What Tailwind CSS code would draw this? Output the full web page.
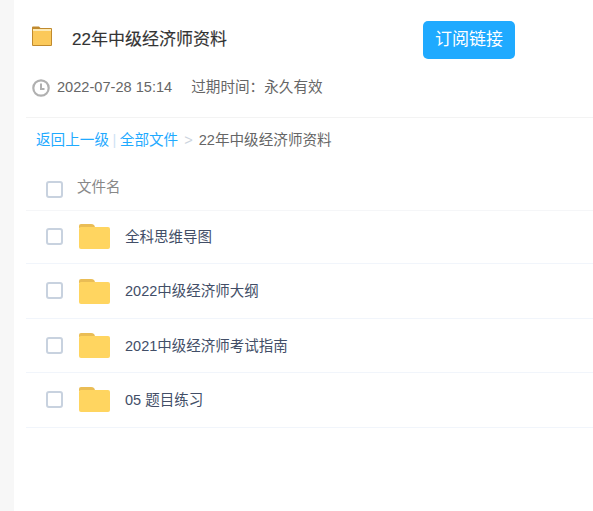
<!DOCTYPE html>
<html lang="zh">
<head>
    <meta charset="UTF-8">
    <title>22年中级经济师资料</title>
    <script src="https://cdn.jsdelivr.net/npm/@tailwindcss/browser@4"></script>
</head>
<body class="h-[511px] overflow-hidden bg-white font-['Liberation_Sans','Noto_Sans_CJK_SC',sans-serif]">
    <div class="flex h-[511px]">
        <!-- Left gutter -->
        <div class="w-[14px] shrink-0 bg-[#f7f7f7]"></div>

        <div class="min-w-0 flex-1 pl-3">
            <!-- Header -->
            <div class="h-[118px] border-b border-[#f3f3f3]">
                <div class="flex h-[77px] items-center pl-[6px]">
                    <svg class="mb-[5px] h-[20px] w-[20px] shrink-0" viewBox="0 0 20 20">
                        <path d="M0 1.5A1 1 0 0 1 1 .5h6l1.5 1.5H19a1 1 0 0 1 1 1V19a1 1 0 0 1-1 1H1a1 1 0 0 1-1-1z" fill="#c08a2e"/>
                        <rect x="1" y="3" width="18" height="16" fill="#fbc95a"/>
                        <rect x="1" y="3" width="18" height="2" fill="#fdeab5"/>
                    </svg>
                    <h1 class="ml-5 mt-[2px] w-[351px] text-[17px] font-normal text-[#333] [-webkit-text-stroke:0.15px_#333]">22年中级经济师资料</h1>
                    <button class="mt-[2px] h-[38px] w-[92px] rounded-[5px] bg-[#1faaff] text-[17px] text-white">订阅链接</button>
                </div>
                <div class="flex items-center pl-[6px] text-[14.6px] text-[#666]">
                    <svg class="h-[18px] w-[18px]" viewBox="0 0 18 18" fill="none" stroke="#b0b0b0">
                        <circle cx="9" cy="9" r="7.7" stroke-width="2.2"/>
                        <path d="M9 4.5V10h3.5" stroke-width="2"/>
                    </svg>
                    <span class="ml-[7px]">2022-07-28 15:14</span>
                    <span class="ml-[19px]">过期时间：永久有效</span>
                </div>
            </div>

            <!-- Breadcrumb -->
            <div class="flex h-[45px] items-center pl-[10px] text-[14.6px] text-[#666]">
                <a class="text-[#1faaff]">返回上一级</a>
                <span class="mx-[3.5px] text-[#cfe3f5]">|</span>
                <a class="text-[#1faaff]">全部文件</a>
                <span class="mx-[6px] text-[#ccd4de]">&gt;</span>
                <span>22年中级经济师资料</span>
            </div>

            <!-- File list -->
            <div class="flex h-[48px] items-center border-b border-[#f5f6f8] pl-5 text-[14.5px] text-[#888]">
                <span class="mt-[5px] h-[17px] w-[17px] rounded-[3px] border-2 border-[#c8d2df]"></span>
                <span class="ml-[14px] mt-[2px]">文件名</span>
            </div>
            <ul class="text-[14.5px] text-[#424e67]">
                <li class="flex h-[53px] items-center border-b border-[#f1f5fb] pl-5">
                    <span class="mb-[1px] h-[17px] w-[17px] rounded-[3px] border-2 border-[#c8d2df]"></span>
                    <svg class="mb-[2px] ml-[16px] h-[26px] w-[31px]" viewBox="0 0 31 26">
                        <path d="M0 3a2 2 0 0 1 2-2h10a4 4 0 0 1 4 4H0z" fill="#eabd55"/>
                        <rect y="4" width="31" height="22" rx="2" fill="#ffd560"/>
                    </svg>
                    <span class="ml-[15px] mt-[2px]">全科思维导图</span>
                </li>
                <li class="flex h-[55px] items-center border-b border-[#f1f5fb] pl-5">
                    <span class="mb-[1px] h-[17px] w-[17px] rounded-[3px] border-2 border-[#c8d2df]"></span>
                    <svg class="ml-[16px] h-[26px] w-[31px]" viewBox="0 0 31 26">
                        <path d="M0 3a2 2 0 0 1 2-2h10a4 4 0 0 1 4 4H0z" fill="#eabd55"/>
                        <rect y="4" width="31" height="22" rx="2" fill="#ffd560"/>
                    </svg>
                    <span class="ml-[15px] mt-[2px]">2022中级经济师大纲</span>
                </li>
                <li class="flex h-[54px] items-center border-b border-[#f1f5fb] pl-5">
                    <span class="h-[17px] w-[17px] rounded-[3px] border-2 border-[#c8d2df]"></span>
                    <svg class="mb-[2px] ml-[16px] h-[26px] w-[31px]" viewBox="0 0 31 26">
                        <path d="M0 3a2 2 0 0 1 2-2h10a4 4 0 0 1 4 4H0z" fill="#eabd55"/>
                        <rect y="4" width="31" height="22" rx="2" fill="#ffd560"/>
                    </svg>
                    <span class="ml-[15px] mt-[2px]">2021中级经济师考试指南</span>
                </li>
                <li class="flex h-[55px] items-center border-b border-[#f1f5fb] pl-5">
                    <span class="mb-[1px] h-[17px] w-[17px] rounded-[3px] border-2 border-[#c8d2df]"></span>
                    <svg class="mb-[2px] ml-[16px] h-[26px] w-[31px]" viewBox="0 0 31 26">
                        <path d="M0 3a2 2 0 0 1 2-2h10a4 4 0 0 1 4 4H0z" fill="#eabd55"/>
                        <rect y="4" width="31" height="22" rx="2" fill="#ffd560"/>
                    </svg>
                    <span class="ml-[15px] mt-[2px]">05 题目练习</span>
                </li>
            </ul>
        </div>
    </div>
</body>
</html>
